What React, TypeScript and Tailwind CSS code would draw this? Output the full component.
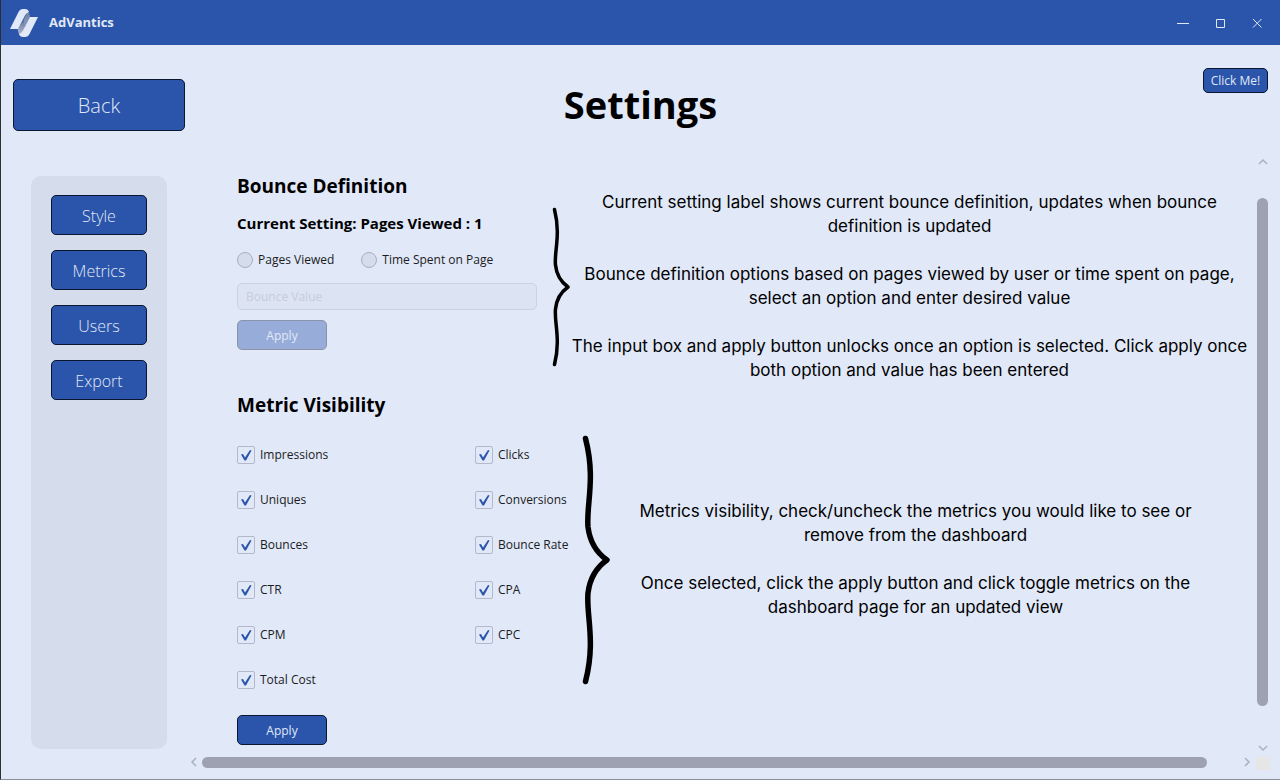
import { useState } from "react";
import type { ReactNode } from "react";

const UI_FONT = "font-['Open_Sans','Noto_Sans',sans-serif]";

function Logo() {
  return (
    <svg viewBox="0 0 28 28" className="h-7 w-7" aria-hidden="true">
      <defs>
        <linearGradient id="foldTop" x1="0" y1="0" x2="0" y2="1">
          <stop offset="0" stopColor="#6f80a6" />
          <stop offset="1" stopColor="#8c9abb" />
        </linearGradient>
        <linearGradient id="foldBottom" x1="0" y1="0" x2="0" y2="1">
          <stop offset="0" stopColor="#66789f" />
          <stop offset="1" stopColor="#b8c2d8" />
        </linearGradient>
      </defs>
      <path d="M18 2 Q20 5 20 8.500 L15 18 Q12.500 14.500 13.500 11 Z" fill="url(#foldTop)" />
      <path d="M7.500 20 L13.500 11.500 Q13 15 15.500 18 L10.500 27 Q8 24 7.500 20 Z" fill="url(#foldBottom)" />
      <path d="M0 20 L8.500 3 Q10 0 13 0 H15 Q18 0 19 3 Q16.500 3.500 15 6.500 L8 20 Z" fill="#e1e8f8" />
      <path d="M28 8 L19.500 25 Q18 28 15 28 H13 Q10 28 9 25 Q11.500 24.500 13 21.500 L20 8 Z" fill="#e1e8f8" />
    </svg>
  );
}

function Button({ className, children, disabled }: { className: string; children: ReactNode; disabled?: boolean }) {
  return (
    <button
      type="button"
      disabled={disabled}
      className={`rounded-[5px] border border-[#0b1730] bg-[#2a55aa] pt-px text-[#e1e8f8] disabled:opacity-40 ${className}`}
    >
      {children}
    </button>
  );
}

function MetricBox({ label }: { label: string }) {
  const [on, setOn] = useState(true);
  return (
    <label className="flex h-[18px] items-center gap-[5px] whitespace-nowrap text-xs text-[#1a1c22]">
      <span className="relative flex">
        <input
          type="checkbox"
          checked={on}
          onChange={() => setOn(!on)}
          className="h-[18px] w-[18px] appearance-none rounded-[2px] border border-[#b3b9cb] bg-[#e1e8f8]"
        />
        {on && (
          <svg viewBox="0 0 18 18" className="pointer-events-none absolute inset-0 h-[18px] w-[18px]" aria-hidden="true">
            <path d="M4 8.500 L6 8 L8 11.500 L13 4 L14.500 4.500 L9 14.500 L7.500 14.500 Z" fill="#2a55aa" />
          </svg>
        )}
      </span>
      {label}
    </label>
  );
}

function Arrow({ d }: { d: string }) {
  return (
    <svg viewBox="0 0 10 10" className="h-[10px] w-[10px] shrink-0" fill="none" stroke="#aab0c1" strokeWidth="1.500" aria-hidden="true">
      <path d={d} />
    </svg>
  );
}

const metrics = [
  "Impressions", "Clicks", "Uniques", "Conversions", "Bounces", "Bounce Rate",
  "CTR", "CPA", "CPM", "CPC", "Total Cost",
];

export default function App() {
  return (
    <div className={`flex min-h-screen flex-col border-b border-l border-b-[#8b8f9b] border-l-[#2b3030] bg-[#e1e8f8] text-black ${UI_FONT}`}>
      <header className="flex h-[45px] items-center bg-[#2a55aa] pl-[9px] text-[#e1e8f8]">
        <Logo />
        <span className="ml-[11px] text-[13px] font-bold">AdVantics</span>
        <div className="ml-auto flex">
          <button type="button" aria-label="Minimize" className="flex h-8 w-[37px] items-center justify-center">
            <svg viewBox="0 0 12 12" className="h-3 w-3" stroke="currentColor"><path d="M0 6.500H12" /></svg>
          </button>
          <button type="button" aria-label="Maximize" className="flex h-8 w-[37px] items-center justify-center">
            <svg viewBox="0 0 12 12" className="h-3 w-3" fill="none" stroke="currentColor"><path d="M2.500 2.500h8v8h-8z" /></svg>
          </button>
          <button type="button" aria-label="Close" className="mr-[5px] flex h-8 w-[37px] items-center justify-center">
            <svg viewBox="0 0 12 12" className="h-3 w-3" stroke="currentColor"><path d="M2 2L10.500 10.500M10.500 2L2 10.500" /></svg>
          </button>
        </div>
      </header>

      <div className="grid grid-cols-[1fr_auto_1fr] px-3 pt-[23px]">
        <Button className="mt-[11px] h-[52px] w-[172px] text-xl font-light">Back</Button>
        <h1 className="mt-[10px] text-[38px] leading-[52px] font-bold">Settings</h1>
        <Button className="h-[25px] w-[65px] justify-self-end text-xs">Click Me!</Button>
      </div>

      <div className="flex flex-1 pt-[25px]">
        <nav className="mt-5 mb-[30px] ml-[30px] flex w-[136px] flex-col items-center gap-[15px] rounded-[10px] bg-[#d5dceb] pt-[19px]">
          <Button className="h-10 w-24 text-base font-light">Style</Button>
          <Button className="h-10 w-24 text-base font-light">Metrics</Button>
          <Button className="h-10 w-24 text-base font-light">Users</Button>
          <Button className="h-10 w-24 text-base font-light">Export</Button>
        </nav>

        <div className="ml-[22px] flex flex-1 flex-col">
          <div className="flex flex-1">
            <main className="flex flex-1 flex-col pt-5 pl-12">
              <section className="flex">
                <div className="flex w-[300px] shrink-0 flex-col items-start">
                  <h2 className="text-[19px] leading-5 font-bold">Bounce Definition</h2>
                  <p className="mt-[17px] text-[15px] leading-5 font-bold whitespace-nowrap">Current Setting: Pages Viewed : 1</p>
                  <div className="mt-[19px] flex gap-[27px] text-xs text-[#1a1c22]">
                    <label className="flex h-4 items-center gap-[5px]">
                      <input type="radio" name="bounce" className="h-4 w-4 appearance-none rounded-full border border-[#a9afbf] bg-[#d5dceb] checked:border-4 checked:border-[#2a55aa]" />
                      Pages Viewed
                    </label>
                    <label className="flex h-4 items-center gap-[5px]">
                      <input type="radio" name="bounce" className="h-4 w-4 appearance-none rounded-full border border-[#a9afbf] bg-[#d5dceb] checked:border-4 checked:border-[#2a55aa]" />
                      Time Spent on Page
                    </label>
                  </div>
                  <input
                    type="text"
                    disabled
                    aria-label="Bounce Value"
                    placeholder="Bounce Value"
                    className="mt-[15px] h-[27px] w-full rounded-[5px] border border-[#cdd2df] bg-[#dce3f2] px-2 text-xs placeholder:text-[#c6cddd]"
                  />
                  <Button disabled className="mt-[10px] h-[30px] w-[90px] text-xs">Apply</Button>
                </div>
                <svg viewBox="0 0 18 160" className="mt-[31px] ml-[15px] h-[160px] w-[18px] shrink-0" fill="none" stroke="black" strokeWidth="3.500" strokeLinecap="round" strokeLinejoin="round" aria-hidden="true">
                  <path d="M2.500 2.500 C9 28 2 45 3.500 58 C4.500 68 9 75 16 80 C9 85 4.500 92 3.500 102 C2 115 9 132 2.500 157.500" />
                </svg>
                <div className="mt-[14px] flex flex-1 flex-col gap-6 text-center font-['Inter','Open_Sans',sans-serif] text-[17px] leading-6 whitespace-nowrap">
                  <p>Current setting label shows current bounce definition, updates when bounce<br />definition is updated</p>
                  <p>Bounce definition options based on pages viewed by user or time spent on page,<br />select an option and enter desired value</p>
                  <p>The input box and apply button unlocks once an option is selected. Click apply once<br />both option and value has been entered</p>
                </div>
                <div className="w-2 shrink-0" />
              </section>

              <section className="mt-[13px] flex">
                <div className="flex w-[328px] shrink-0 flex-col items-start">
                  <h2 className="text-[19px] leading-5 font-bold">Metric Visibility</h2>
                  <div className="mt-[31px] grid grid-cols-[238px_90px] gap-y-[27px]">
                    {metrics.map((m) => <MetricBox key={m} label={m} />)}
                  </div>
                  <Button className="mt-[26px] h-[30px] w-[90px] text-xs">Apply</Button>
                </div>
                <svg viewBox="0 0 28 250" className="mt-10 ml-[17px] h-[250px] w-7 shrink-0" fill="none" stroke="black" strokeWidth="5.500" strokeLinecap="round" strokeLinejoin="round" aria-hidden="true">
                  <path d="M3.500 3.500 C14 44 4 70 6 92 C8 108 15 118 25 125 C15 132 8 142 6 158 C4 180 14 206 3.500 246.500" />
                </svg>
                <div className="mt-[104px] flex flex-1 flex-col gap-6 text-center font-['Inter','Open_Sans',sans-serif] text-[17px] leading-6 whitespace-nowrap">
                  <p>Metrics visibility, check/uncheck the metrics you would like to see or<br />remove from the dashboard</p>
                  <p>Once selected, click the apply button and click toggle metrics on the<br />dashboard page for an updated view</p>
                </div>
                <div className="w-9 shrink-0" />
              </section>
            </main>
            <div className="mr-3 flex w-[11px] flex-col items-center">
              <Arrow d="M1 8 L5 4 L9 8" />
              <div className="mt-8 mb-9 w-[11px] flex-1 rounded-full bg-[#9ea1b2]" />
              <Arrow d="M1 4 L5 8 L9 4" />
            </div>
          </div>
          <div className="flex h-[27px] items-start pt-[5px]">
            <Arrow d="M7 1 L3 5 L7 9" />
            <div className="ml-[3px] h-[11px] flex-1 rounded-full bg-[#9ea1b2]" />
            <div className="ml-[35px]"><Arrow d="M3 1 L7 5 L3 9" /></div>
            <div className="mr-[10px] ml-1 h-[13px] w-[14px] bg-[#e6e6e6]" />
          </div>
        </div>
      </div>
    </div>
  );
}
